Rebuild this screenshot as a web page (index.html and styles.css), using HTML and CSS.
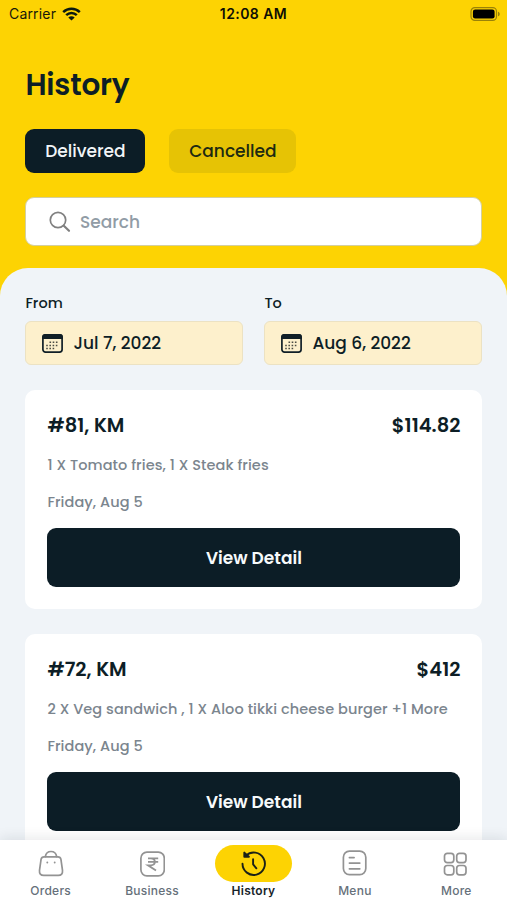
FILE: index.html
```html
<!DOCTYPE html>
<html lang="en">
<head>
<meta charset="utf-8">
<meta name="viewport" content="width=device-width, initial-scale=1">
<title>History</title>
<link rel="stylesheet" href="styles.css">
</head>
<body>
<div class="app">
  <div class="status">
    <div class="carrier">
      <span>Carrier</span>
      <svg width="19" height="14" viewBox="0 0 19 14" fill="none" stroke="#0b1a10" stroke-width="2.5">
        <path d="M1.2 5.1C5.9.6 13.1.6 17.8 5.1"/>
        <path d="M4.2 8.2c3-2.9 7.6-2.9 10.6 0"/>
        <path d="M6.3 10.4c1.8-1.7 4.600-1.700 6.400 0L9.500 13.600z" fill="#0b1a10" stroke="none"/>
      </svg>
    </div>
    <span class="time">12:08 AM</span>
    <svg class="battery" width="31" height="14" viewBox="0 0 31 14">
      <rect x="1" y=".6" width="25.500" height="12.800" rx="3.800" fill="none" stroke="#9a8208" stroke-width="1.200"/>
      <rect x="2.900" y="2.500" width="21.700" height="9" rx="2.200" fill="#000"/>
      <path d="M28 4.700c2.300.7 2.300 3.900 0 4.600z" fill="#9a8208"/>
    </svg>
  </div>

  <header class="top">
    <h1>History</h1>
    <div class="tabs">
      <button class="tab tab-on">Delivered</button>
      <button class="tab tab-off">Cancelled</button>
    </div>
    <div class="search">
      <svg width="22" height="22" viewBox="0 0 22 22" fill="none" stroke="#808080" stroke-linecap="round">
        <circle cx="9" cy="9" r="7.700" stroke-width="1.700"/>
        <path d="M14.800 14.800l5.200 5" stroke-width="2.200"/>
      </svg>
      <span>Search</span>
    </div>
  </header>

  <main class="sheet">
    <div class="dates">
      <div class="field">
        <span class="label">From</span>
        <div class="date">
          <svg width="21" height="19" viewBox="0 0 21 19">
            <rect x=".9" y=".9" width="19.200" height="17.200" rx="2.600" fill="none" stroke="#101f27" stroke-width="1.700"/>
            <path d="M.1 5V3Q.1.100 3.100.100h14.800q3 0 3 2.900v2z" fill="#101f27"/>
            <path d="M7.500 8.200h9.500M4.200 11.400h12.800M4.200 14.600h9.500" stroke="#4c4d45" stroke-width="1.500" stroke-dasharray="1.600 1.600"/>
          </svg>
          <span>Jul 7, 2022</span>
        </div>
      </div>
      <div class="field">
        <span class="label">To</span>
        <div class="date">
          <svg width="21" height="19" viewBox="0 0 21 19">
            <rect x=".9" y=".9" width="19.200" height="17.200" rx="2.600" fill="none" stroke="#101f27" stroke-width="1.700"/>
            <path d="M.1 5V3Q.1.100 3.100.100h14.800q3 0 3 2.900v2z" fill="#101f27"/>
            <path d="M7.500 8.200h9.500M4.200 11.400h12.800M4.200 14.600h9.500" stroke="#4c4d45" stroke-width="1.500" stroke-dasharray="1.600 1.600"/>
          </svg>
          <span>Aug 6, 2022</span>
        </div>
      </div>
    </div>

    <article class="card">
      <div class="card-head"><h2>#81, KM</h2><span>$114.82</span></div>
      <p class="items">1 X Tomato fries, 1 X Steak fries</p>
      <p class="day">Friday, Aug 5</p>
      <button class="detail">View Detail</button>
    </article>

    <article class="card">
      <div class="card-head"><h2>#72, KM</h2><span>$412</span></div>
      <p class="items">2 X Veg sandwich , 1 X Aloo tikki cheese burger +1 More</p>
      <p class="day">Friday, Aug 5</p>
      <button class="detail">View Detail</button>
    </article>
  </main>

  <nav class="nav">
    <a class="item">
      <span class="pill"><svg width="26" height="28" viewBox="0 0 26 28" fill="none" stroke="#939393" stroke-width="1.700" stroke-linecap="round">
        <path d="M6 6.800h14q2.400 0 2.900 2.400l1.600 11.200q.5 4.900-4.300 4.900H5.800q-4.800 0-4.300-4.900L3.100 9.200q.5-2.400 2.900-2.400z"/>
        <path d="M7.300 6.600c1.200-6.800 10.200-6.800 11.400 0"/>
        <path d="M9.300 12.400v.1M16.700 12.400v.1" stroke-width="1.900"/>
      </svg></span>
      <span>Orders</span>
    </a>
    <a class="item">
      <span class="pill"><svg width="26" height="28" viewBox="0 0 26 28" fill="none" stroke="#939393" stroke-width="1.700">
        <rect x="1.900" y="2.200" width="23.400" height="23.600" rx="6"/>
        <path d="M9 8.400h10.200M9 11.900h10.200M9 8.400h2.800c5.400 0 5.400 6.900 0 6.900H9l8 5.200" stroke-width="1.800"/>
      </svg></span>
      <span>Business</span>
    </a>
    <a class="item active">
      <span class="pill"><svg width="26" height="28" viewBox="0 0 26 28" fill="none" stroke="#1b2117" stroke-width="1.900" stroke-linecap="round" stroke-linejoin="round">
        <path d="M2.500 13.800A11.200 11.200 0 1 0 6 5.600"/>
        <path d="M4.300 2.600v4.200l4.600-.1z" fill="#1b2117"/>
        <path d="M13.100 9.300v5l3.300 4"/>
      </svg></span>
      <span>History</span>
    </a>
    <a class="item">
      <span class="pill"><svg width="26" height="28" viewBox="0 0 26 28" fill="none" stroke="#939393" stroke-width="1.700" stroke-linecap="round">
        <rect x="1.400" y="1.200" width="22.400" height="23.400" rx="6"/>
        <path d="M7.400 7.600h4.700M7.400 13.100h10.400M7.400 18.800h10.400"/>
      </svg></span>
      <span>Menu</span>
    </a>
    <a class="item">
      <span class="pill"><svg width="26" height="28" viewBox="0 0 26 28" fill="none" stroke="#939393" stroke-width="1.700">
        <rect x="1.500" y="3.300" width="9.300" height="9.300" rx="2.800"/>
        <rect x="13.700" y="3.300" width="9.300" height="9.300" rx="2.800"/>
        <rect x="1.500" y="15.500" width="9.300" height="9.300" rx="2.800"/>
        <rect x="13.700" y="15.500" width="9.300" height="9.300" rx="2.800"/>
      </svg></span>
      <span>More</span>
    </a>
  </nav>
</div>
</body>
</html>
```
FILE: styles.css
```css
* { box-sizing: border-box; }

body {
  margin: 0;
  font-family: Poppins, Inter, "Open Sans", sans-serif;
  color: #0d1e26;
  background: #fdd303;
}

h1, h2, p { margin: 0; }

button {
  border: 0;
  padding: 0;
  font: inherit;
  color: inherit;
}

svg { display: block; flex: none; }

.app {
  height: 900px;
  display: flex;
  flex-direction: column;
  overflow: hidden;
}

/* Status bar */
.status {
  flex: none;
  height: 28px;
  padding: 0 6px 1px 9px;
  display: grid;
  grid-template-columns: 1fr auto 1fr;
  align-items: center;
  font-family: Inter, sans-serif;
  font-size: 14px;
  color: #17180a;
}
.carrier { display: flex; align-items: center; gap: 6px; letter-spacing: .18px; }
.time { margin-right: 3px; font-weight: 600; letter-spacing: .44px; color: #0d0e05; }
.battery { justify-self: end; }

/* Header */
.top { flex: none; height: 240px; padding: 36px 24.6px 0 25.4px; }
h1 {
  font-size: 29.5px;
  line-height: 41px;
  font-weight: 600;
  letter-spacing: -.2px;
}
.tabs { display: flex; gap: 24px; margin-top: 24px; }
.tab {
  height: 44px;
  padding-bottom: 1px;
  border-radius: 9px;
  font-size: 17px;
  font-weight: 500;
}
.tab-on { width: 120px; background: #0c1d26; color: #f1f5f7; }
.tab-off { width: 127px; background: #e6c305; color: #1d2a12; }
.search {
  height: 49px;
  margin-top: 24px;
  padding-left: 22.6px;
  display: flex;
  align-items: center;
  gap: 9px;
  background: #fff;
  border: 1px solid #d3cfa0;
  border-radius: 9px;
  font-size: 17px;
  font-weight: 500;
  color: #919ca6;
}

/* Content sheet */
.sheet {
  flex: 1;
  min-height: 0;
  overflow: hidden;
  padding: 25px 24.6px 0 25.4px;
  background: #f0f4f8;
  border-radius: 28px 28px 0 0;
}
.dates { display: grid; grid-template-columns: 1fr 1fr; gap: 21px; }
.label {
  display: block;
  height: 28px;
  line-height: 20px;
  font-size: 14.5px;
  font-weight: 500;
}
.date {
  height: 44px;
  padding-left: 16px;
  display: flex;
  align-items: center;
  gap: 10px;
  background: #fdf0cc;
  border: 1px solid #ece2c3;
  border-radius: 6px;
  font-size: 17px;
  font-weight: 500;
}

.card {
  height: 219px;
  margin-top: 25px;
  padding: 21px 22px 22px;
  background: #fff;
  border-radius: 10px;
}
.card-head {
  display: flex;
  justify-content: space-between;
  font-size: 19.5px;
  line-height: 30px;
  font-weight: 600;
}
h2 { font: inherit; }
.items, .day {
  font-size: 14.5px;
  line-height: 20px;
  font-weight: 500;
  letter-spacing: .08px;
  color: #7b858e;
  white-space: nowrap;
}
.items { margin-top: 14px; }
.day { margin-top: 17px; }
.detail {
  display: block;
  width: 100%;
  height: 59px;
  margin-top: 16px;
  background: #0c1d26;
  border-radius: 9px;
  font-size: 17px;
  font-weight: 600;
  color: #f7fafb;
}

/* Bottom navigation */
.nav {
  position: relative;
  flex: none;
  height: 60px;
  padding-top: 5px;
  display: grid;
  grid-template-columns: repeat(5, 1fr);
  background: #fff;
  box-shadow: 0 -2px 12px rgba(20, 30, 40, .1);
}
.item {
  display: flex;
  flex-direction: column;
  align-items: center;
  font-family: Inter, sans-serif;
  font-size: 12px;
  line-height: 18px;
  font-weight: 500;
  letter-spacing: .25px;
  color: #66707a;
}
.pill {
  width: 77px;
  height: 37px;
  display: flex;
  align-items: center;
  justify-content: center;
  border-radius: 19px;
}
.active { font-weight: 600; color: #17242b; }
.active .pill { background: #fdd303; }
```
